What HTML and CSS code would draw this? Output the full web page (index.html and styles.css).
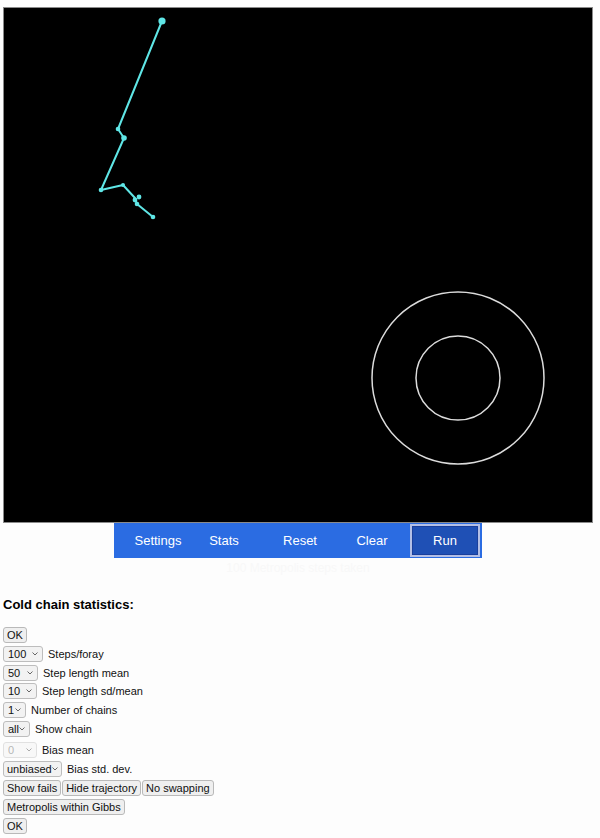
FILE: index.html
```html
<!DOCTYPE html>
<html>
<head>
<meta charset="utf-8">
<link rel="stylesheet" href="styles.css">
</head>
<body>
<div class="stage">
  <svg class="plot" width="588" height="514" viewBox="0 0 588 514">
    <circle cx="454" cy="370" r="86" fill="none" stroke="#dcdcdc" stroke-width="1.5"/>
    <circle cx="454" cy="370" r="42" fill="none" stroke="#dcdcdc" stroke-width="1.5"/>
    <polyline points="158,13 114,121 120,130 97,182 119,177 131,190 133,196 149,209" fill="none" stroke="#5fe6e6" stroke-width="2" stroke-linejoin="round"/>
    <g fill="#5fe6e6">
      <circle cx="158" cy="13" r="3.6"/>
      <circle cx="114" cy="121" r="2.3"/>
      <circle cx="120" cy="130" r="2.8"/>
      <circle cx="97" cy="182" r="2.3"/>
      <circle cx="119" cy="177" r="2"/>
      <circle cx="135" cy="189" r="2.4"/>
      <circle cx="131" cy="192" r="2.4"/>
      <circle cx="133" cy="196" r="2.3"/>
      <circle cx="149" cy="209" r="2.3"/>
    </g>
  </svg>
</div>
<nav class="toolbar">
  <button class="tb tb-settings">Settings</button>
  <button class="tb tb-stats">Stats</button>
  <button class="tb tb-reset">Reset</button>
  <button class="tb tb-clear">Clear</button>
  <button class="tb tb-run">Run</button>
</nav>
<div class="status">100 Metropolis steps taken</div>
<h4 class="heading">Cold chain statistics:</h4>
<div class="controls">
  <div class="row"><button class="btn">OK</button></div>
  <div class="row"><span class="sel w100"><select><option>100</option></select><svg class="chev" width="6" height="4" viewBox="0 0 6 4"><path d="M0.5 0.5 L3 3 L5.5 0.5" fill="none" stroke="#666" stroke-width="1"/></svg></span><span class="lbl">Steps/foray</span></div>
  <div class="row"><span class="sel w50"><select><option>50</option></select><svg class="chev" width="6" height="4" viewBox="0 0 6 4"><path d="M0.5 0.5 L3 3 L5.5 0.5" fill="none" stroke="#666" stroke-width="1"/></svg></span><span class="lbl">Step length mean</span></div>
  <div class="row"><span class="sel w10"><select><option>10</option></select><svg class="chev" width="6" height="4" viewBox="0 0 6 4"><path d="M0.5 0.5 L3 3 L5.5 0.5" fill="none" stroke="#666" stroke-width="1"/></svg></span><span class="lbl">Step length sd/mean</span></div>
  <div class="row"><span class="sel w1"><select><option>1</option></select><svg class="chev" width="6" height="4" viewBox="0 0 6 4"><path d="M0.5 0.5 L3 3 L5.5 0.5" fill="none" stroke="#666" stroke-width="1"/></svg></span><span class="lbl">Number of chains</span></div>
  <div class="row"><span class="sel wall"><select><option>all</option></select><svg class="chev" width="6" height="4" viewBox="0 0 6 4"><path d="M0.5 0.5 L3 3 L5.5 0.5" fill="none" stroke="#666" stroke-width="1"/></svg></span><span class="lbl">Show chain</span></div>
  <div class="row row-gap"><span class="sel w0 disabled"><select disabled><option>0</option></select><svg class="chev" width="6" height="4" viewBox="0 0 6 4"><path d="M0.5 0.5 L3 3 L5.5 0.5" fill="none" stroke="#aaa" stroke-width="1"/></svg></span><span class="lbl">Bias mean</span></div>
  <div class="row"><span class="sel wunb"><select><option>unbiased</option></select><svg class="chev" width="6" height="4" viewBox="0 0 6 4"><path d="M0.5 0.5 L3 3 L5.5 0.5" fill="none" stroke="#666" stroke-width="1"/></svg></span><span class="lbl">Bias std. dev.</span></div>
  <div class="row row-gap2"><button class="btn">Show fails</button><button class="btn">Hide trajectory</button><button class="btn">No swapping</button></div>
  <div class="row"><button class="btn">Metropolis within Gibbs</button></div>
  <div class="row"><button class="btn">OK</button></div>
</div>
</body>
</html>
```

FILE: styles.css
```css
html, body {
  margin: 0;
  padding: 0;
  background: #fdfdfd;
  font-family: "Liberation Sans", Arial, sans-serif;
  color: #000;
}

.stage {
  width: 588px;
  height: 514px;
  margin: 7px 0 0 3px;
  border: 1px solid #8a8a8a;
  background: #000;
}

.plot {
  display: block;
}

.toolbar {
  display: flex;
  align-items: center;
  width: 368px;
  height: 35px;
  margin: 0 0 0 114px;
  background: #2b6ce2;
  box-sizing: border-box;
  padding-left: 10px;
}

.tb {
  font-family: "Liberation Sans", Arial, sans-serif;
  font-size: 13px;
  color: #fff;
  background: transparent;
  border: none;
  padding: 0;
  height: 33px;
  text-align: center;
}

.tb-settings { width: 68px; }
.tb-stats { width: 64px; }
.tb-reset { width: 72px; margin-left: 8px; }
.tb-clear { width: 72px; }
.tb-run {
  width: 70px;
  height: 33px;
  margin-left: 2px;
  background: #1f50b5;
  border: 2px solid #b3bfe6;
  outline: 1px solid #1a3f9c;
  outline-offset: -3px;
  box-sizing: border-box;
}

.status {
  height: 20px;
  text-align: center;
  font-size: 12px;
  color: #f8f8f8;
  line-height: 20px;
  margin-left: -4px;
}

.heading {
  font-size: 13px;
  font-weight: bold;
  margin: 19px 0 14px 3px;
  line-height: 16px;
}

.controls {
  display: flex;
  flex-direction: column;
  gap: 2.8px;
  padding-left: 3px;
}

.row {
  display: flex;
  align-items: center;
  height: 16px;
}

.row-gap { margin-top: 2px; }
.row-gap2 { margin-top: 1px; }

.btn {
  font-family: "Liberation Sans", Arial, sans-serif;
  font-size: 11px;
  height: 16px;
  line-height: 14px;
  padding: 0 3px;
  margin: 0 1px 0 0;
  border: 1px solid #b9b9b9;
  border-radius: 3px;
  background: #efefef;
  color: #111;
  box-sizing: border-box;
}

.sel {
  position: relative;
  display: flex;
  height: 16px;
}

.sel select {
  -webkit-appearance: none;
  appearance: none;
  display: block;
  font-family: "Liberation Sans", Arial, sans-serif;
  font-size: 11px;
  height: 16px;
  width: 100%;
  line-height: 14px;
  padding: 0 0 0 4px;
  margin: 0;
  border: 1px solid #bdbdbd;
  border-radius: 3px;
  background: #f2f2f2;
  color: #111;
  box-sizing: border-box;
}

.sel .chev {
  position: absolute;
  right: 5px;
  top: 6px;
}

.sel.disabled select {
  color: #999;
  background: #f7f7f7;
  border-color: #d6d6d6;
}

.w100 { width: 40px; }
.w50 { width: 35px; }
.w10 { width: 34px; }
.w1 { width: 23px; }
.wall { width: 27px; }
.w0 { width: 34px; }
.wunb { width: 59px; }
.wunb select { padding-left: 3px; }
.wunb .chev { right: 4px; }

.lbl {
  font-size: 11px;
  margin-left: 5px;
  color: #111;
}
```
